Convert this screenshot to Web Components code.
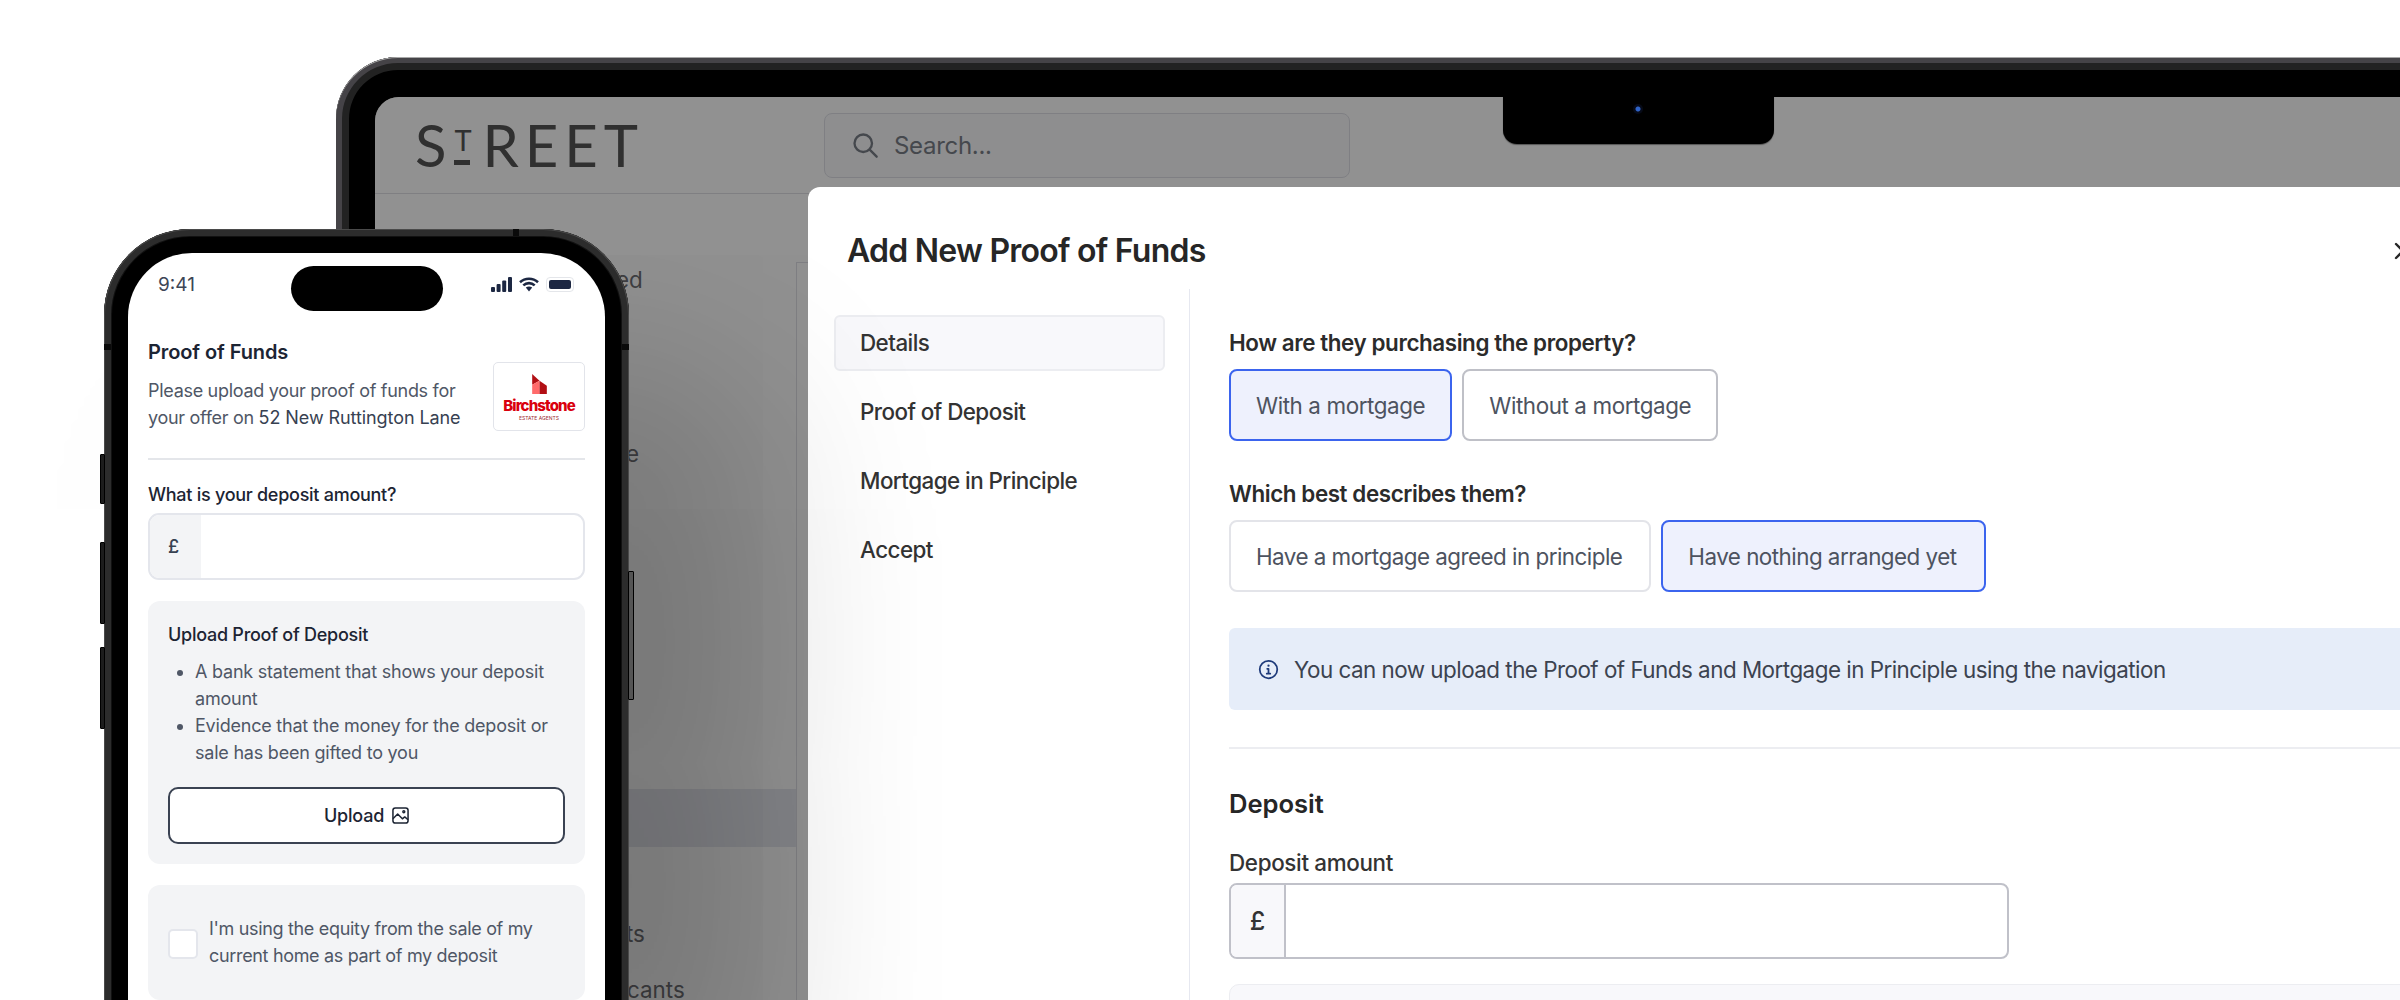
<!DOCTYPE html>
<html lang="en">
<head>
<meta charset="utf-8">
<title>Proof of Funds</title>
<style>
	html, body { margin: 0; width: 2400px; height: 1000px; overflow: hidden; background: #fff; }
	body { font-family: Inter, "Liberation Sans", sans-serif; position: relative; }
</style>
</head>
<body>
	<laptop-frame>
		<app-header></app-header>
		<app-sidebar>
			<side-text style="--x: 241px; --top: 72px">ed</side-text>
			<side-text style="--x: 251px; --top: 146px">e</side-text>
			<side-row style="--top: 321px"></side-row>
			<side-text style="--x: 251px; --top: 73px">ts</side-text>
			<side-text style="--x: 252px; --top: 28px">cants</side-text>
		</app-sidebar>
		<proof-modal slot="over"></proof-modal>
	</laptop-frame>

	<phone-frame>
		<status-bar></status-bar>
		<phone-form></phone-form>
	</phone-frame>

<script>
	class ShadowElement extends HTMLElement {
		constructor() {
			super();
			this.attachShadow({ mode: 'open' });
			this.shadowRoot.innerHTML = this.constructor.markup;
		}
	}

	const define = (name, markup) => {
		window.customElements.define(name, class extends ShadowElement {
			static get markup() { return markup; }
		});
	};

	define('laptop-frame', /* html */ `
		<style>
			:host {
				display: block;
				box-sizing: border-box;
				margin: 57px 0 0 336px;
				width: 2200px;
				height: 1100px;
				padding: 40px 0 0 39px;
				background: #000;
				border-radius: 62px;
				box-shadow:
					inset 0 1px 0 #a8a8a8,
					inset 0 0 0 6px #454347,
					inset 0 0 0 13px #222;
			}
			.screen {
				position: relative;
				height: 100%;
				background: #fff;
				border-radius: 24px 0 0 0;
				overflow: hidden;
				display: flex;
				flex-direction: column;
			}
			.dim {
				position: absolute;
				inset: 0;
				background: rgba(0, 0, 0, .43);
			}
			.notch {
				position: absolute;
				left: 1128px;
				top: -1px;
				width: 271px;
				height: 48px;
				background: #000;
				border-radius: 0 0 14px 14px;
				box-shadow: 0 1px 1px #555;
			}
			.camera {
				position: absolute;
				left: 130px;
				top: 8px;
				width: 10px;
				height: 10px;
				border-radius: 50%;
				background: radial-gradient(circle, #2f63c8 0 2px, #060a18 3px 5px);
			}
		</style>
		<div class="screen">
			<slot></slot>
			<div class="dim"></div>
			<div class="notch"><div class="camera"></div></div>
			<slot name="over"></slot>
		</div>
	`);

	define('app-header', /* html */ `
		<style>
			:host {
				display: flex;
				flex: none;
				align-items: center;
				box-sizing: border-box;
				height: 97px;
				border-bottom: 1px solid #dfe0e5;
			}
			.logo {
				display: flex;
				align-items: flex-start;
				width: 409px;
				margin-left: 40px;
				font: 400 58px/42px Lato, "Liberation Sans", sans-serif;
				letter-spacing: 6px;
				color: #555;
			}
			.mini {
				position: relative;
				height: 42px;
				width: 28px;
				margin-left: 2px;
				font-size: 29px;
				line-height: 31px;
				letter-spacing: 0;
			}
			.mini i {
				position: absolute;
				left: 0;
				bottom: 1px;
				width: 16px;
				height: 5px;
				background: #555;
			}
			.search {
				display: flex;
				align-items: center;
				gap: 15px;
				box-sizing: border-box;
				width: 526px;
				height: 65px;
				padding-left: 26px;
				border: 1px solid #dfe0e6;
				border-radius: 8px;
				background: #f9f9fb;
				font-size: 24px;
				letter-spacing: -.3px;
				color: #7a7f88;
			}
			svg { width: 28px; height: 28px; fill: none; stroke: #7a7f88; stroke-width: 2; stroke-linecap: round; }
		</style>
		<div class="logo"><span>S</span><span class="mini">T<i></i></span><span>REET</span></div>
		<div class="search">
			<svg viewBox="0 0 24 24"><circle cx="10.5" cy="10.5" r="7.5"/><path d="M16 16l6 6"/></svg>
			<span>Search...</span>
		</div>
	`);

	define('app-sidebar', /* html */ `
		<style>
			:host { display: flex; flex: 1; }
			.nav { display: flex; flex-direction: column; width: 421px; flex: none; }
			.panel {
				flex: 1;
				margin-top: 68px;
				border-left: 1px solid #dfe0e7;
				border-top: 1px solid #dfe0e7;
				background: #fff;
			}
		</style>
		<div class="nav"><slot></slot></div>
		<div class="panel"></div>
	`);

	define('side-text', /* html */ `
		<style>
			:host {
				display: block;
				margin-top: var(--top);
				padding-left: var(--x);
				font-size: 22.4px;
				line-height: 28px;
				color: #6f7075;
			}
		</style>
		<slot></slot>
	`);

	define('side-row', /* html */ `
		<style>
			:host {
				display: block;
				margin-top: var(--top);
				height: 58px;
				background: #e6e8f0;
			}
		</style>
	`);

	define('proof-modal', /* html */ `
		<style>
			:host {
				position: absolute;
				left: 433px;
				top: 90px;
				width: 1620px;
				height: 920px;
				background: #fff;
				border-radius: 12px 0 0 0;
				color: #262626;
			}
			.head {
				display: flex;
				justify-content: space-between;
				align-items: center;
				box-sizing: border-box;
				height: 102px;
				padding: 26px 16px 0 39px;
			}
			h1 { margin: 0; font-size: 32px; line-height: 40px; font-weight: 600; letter-spacing: -.75px; }
			.close { width: 18px; height: 18px; fill: none; stroke: #262626; stroke-width: 2.4; stroke-linecap: round; }
			.body { display: flex; }
			nav {
				box-sizing: border-box;
				width: 382px;
				flex: none;
				height: 820px;
				padding: 26px 24px 0 26px;
				border-right: 1px solid #e6e8f0;
				display: flex;
				flex-direction: column;
				gap: 13px;
			}
			main { flex: 1; padding: 40px 0 0 39px; }
			h2 { margin: 0; font-size: 22.4px; line-height: 28px; font-weight: 600; letter-spacing: -.41px; color: #2b2b2b; }
			.choices { display: flex; gap: 10px; margin-top: 12px; }
			.second { margin-top: 39px; }
			.divider { height: 2px; margin-top: 37px; background: #ecedf1; }
			h3 { margin: 39px 0 0; font-size: 25.6px; line-height: 32px; font-weight: 600; letter-spacing: -.05px; }
			label { display: block; margin-top: 29px; font-size: 22.4px; line-height: 28px; font-weight: 500; letter-spacing: -.33px; color: #333; }
			.next {
				height: 120px;
				margin-top: 25px;
				background: #f8f8fb;
				border: 1px solid #ecedf1;
				border-radius: 10px;
			}
		</style>
		<div class="head">
			<h1>Add New Proof of Funds</h1>
			<svg class="close" viewBox="0 0 18 18"><path d="M2 2l14 14M16 2L2 16"/></svg>
		</div>
		<div class="body">
			<nav>
				<modal-tab active>Details</modal-tab>
				<modal-tab>Proof of Deposit</modal-tab>
				<modal-tab>Mortgage in Principle</modal-tab>
				<modal-tab>Accept</modal-tab>
			</nav>
			<main>
				<h2>How are they purchasing the property?</h2>
				<div class="choices">
					<choice-button selected>With a mortgage</choice-button>
					<choice-button strong>Without a mortgage</choice-button>
				</div>
				<h2 class="second">Which best describes them?</h2>
				<div class="choices">
					<choice-button tight>Have a mortgage agreed in principle</choice-button>
					<choice-button tight selected>Have nothing arranged yet</choice-button>
				</div>
				<info-banner>You can now upload the Proof of Funds and Mortgage in Principle using the navigation</info-banner>
				<div class="divider"></div>
				<h3>Deposit</h3>
				<label>Deposit amount</label>
				<money-input></money-input>
				<div class="next"></div>
			</main>
		</div>
	`);

	define('modal-tab', /* html */ `
		<style>
			:host {
				display: flex;
				align-items: center;
				box-sizing: border-box;
				height: 56px;
				padding: 0 0 2px 24px;
				border: 2px solid transparent;
				border-radius: 6px;
				font-size: 22.4px;
				font-weight: 500;
				letter-spacing: -.55px;
				color: #333;
			}
			:host([active]) { background: #f8f8fb; border-color: #ecedf1; }
		</style>
		<slot></slot>
	`);

	define('choice-button', /* html */ `
		<style>
			:host {
				display: flex;
				align-items: center;
				box-sizing: border-box;
				height: 72px;
				padding: 0 25px;
				border: 2px solid #e3e4e9;
				border-radius: 8px;
				font-size: 22.4px;
				letter-spacing: -.4px;
				color: #4d5360;
			}
			:host([tight]) { padding-right: 27px; letter-spacing: -.52px; }
			:host([strong]) { border-color: #bfc0c7; }
			:host([selected]) { background: #eef1fd; border-color: #3b64ee; }
		</style>
		<slot></slot>
	`);

	define('info-banner', /* html */ `
		<style>
			:host {
				display: flex;
				align-items: center;
				gap: 15px;
				box-sizing: border-box;
				height: 82px;
				margin-top: 36px;
				padding-left: 29px;
				background: #e6edf9;
				border-radius: 6px 0 0 6px;
				font-size: 22.4px;
				letter-spacing: -.51px;
				color: #3c4350;
			}
			svg { width: 21px; height: 21px; flex: none; fill: none; stroke: #1e3a7a; stroke-width: 2; stroke-linecap: round; stroke-linejoin: round; }
			.dot { fill: #1e3a7a; stroke: none; }
		</style>
		<svg viewBox="0 0 24 24">
			<circle cx="12" cy="12" r="10"/>
			<path d="M10.5 11.2H12V16.5M10 16.8h4"/>
			<circle class="dot" cx="12" cy="7.6" r="1.3"/>
		</svg>
		<span><slot></slot></span>
	`);

	define('money-input', /* html */ `
		<style>
			:host {
				display: flex;
				box-sizing: border-box;
				width: 780px;
				height: 76px;
				margin-top: 6px;
				border: 2px solid #c0c1c9;
				border-radius: 8px;
				overflow: hidden;
			}
			span {
				display: flex;
				align-items: center;
				justify-content: center;
				width: 53px;
				background: #f8f8fb;
				border-right: 2px solid #c0c1c9;
				font-size: 25px;
				font-weight: 500;
				color: #333;
			}
		</style>
		<span>£</span>
	`);

	define('phone-frame', /* html */ `
		<style>
			:host {
				position: absolute;
				left: 104px;
				top: 229px;
				display: block;
				box-sizing: border-box;
				width: 525px;
				height: 900px;
				padding: 24px 24px 0;
				background: #000;
				border-radius: 86px;
				box-shadow:
					inset 0 0 0 1px #4a4a4a,
					inset 0 0 0 7px #2c2c2c,
					inset 0 0 0 8px #111,
					120px 150px 200px rgba(0, 0, 0, .2);
			}
			.screen {
				position: relative;
				height: 100%;
				background: #fff;
				border-radius: 64px;
			}
			.island {
				position: absolute;
				left: 163px;
				top: 13px;
				width: 152px;
				height: 45px;
				border-radius: 23px;
				background: #000;
			}
			.key { position: absolute; background: #1c1c1c; border: 1px solid #000; box-sizing: border-box; border-radius: 1px; }
			.left { left: -4px; width: 5px; }
			.right { right: -5px; width: 6px; top: 342px; height: 129px; background: #555; }
			.band { position: absolute; background: #0a0a0a; }
		</style>
		<div class="key left" style="top: 225px; height: 50px"></div>
		<div class="key left" style="top: 313px; height: 82px"></div>
		<div class="key left" style="top: 418px; height: 82px"></div>
		<div class="key right"></div>
		<div class="band" style="right: 0; top: 115px; width: 7px; height: 6px"></div>
		<div class="band" style="left: 0; top: 115px; width: 7px; height: 6px"></div>
		<div class="band" style="right: 110px; top: 0; width: 6px; height: 7px"></div>
		<div class="screen">
			<div class="island"></div>
			<slot></slot>
		</div>
	`);

	define('status-bar', /* html */ `
		<style>
			:host {
				display: flex;
				justify-content: space-between;
				align-items: center;
				box-sizing: border-box;
				height: 62px;
				padding: 0 31px 0 30px;
				font-size: 19px;
				color: #3d4656;
			}
			.icons { display: flex; align-items: center; gap: 7px; }
			svg { display: block; fill: #1c2742; }
			.wifi { fill: none; stroke: #1c2742; stroke-width: 2.6; }
			.battery {
				position: relative;
				box-sizing: border-box;
				width: 28px;
				height: 15px;
				padding: 2px;
				border: 1px solid #e4e6ea;
				border-radius: 4px;
			}
			.battery i { display: block; height: 100%; background: #1c2742; border-radius: 2px; }
		</style>
		<span>9:41</span>
		<div class="icons">
			<svg width="21" height="15" viewBox="0 0 21 15">
				<rect x="0" y="10" width="4" height="5" rx="1"/>
				<rect x="5.6" y="7" width="4" height="8" rx="1"/>
				<rect x="11.2" y="3.5" width="4" height="11.5" rx="1"/>
				<rect x="17" y="0" width="4" height="15" rx="1"/>
			</svg>
			<svg width="20" height="15" viewBox="0 0 20 15">
				<path class="wifi" d="M1 5.2C6 .6 14 .6 19 5.2M4.3 8.4c3.3-3 8.1-3 11.4 0"/>
				<path d="M6.8 10.6c2-1.6 4.4-1.6 6.4 0L10 14.6z"/>
			</svg>
			<div class="battery"><i></i></div>
		</div>
	`);

	define('birchstone-logo', /* html */ `
		<style>
			:host {
				display: flex;
				flex-direction: column;
				align-items: center;
				box-sizing: border-box;
				flex: none;
				width: 92px;
				height: 69px;
				padding-top: 11px;
				border: 1.5px solid #e2e4ea;
				border-radius: 5px;
				background: #fff;
				letter-spacing: 0;
			}
			svg { display: block; width: 15px; height: 20px; }
			b { margin-top: 3px; font-size: 15px; line-height: 18px; font-weight: 800; letter-spacing: -.9px; color: #d9000d; }
			span { font-size: 5px; line-height: 7px; color: #9c2a30; white-space: nowrap; }
		</style>
		<svg viewBox="0 0 44 60">
			<path fill="#b20f14" d="M0 0L22 20 0 32z"/>
			<path fill="#ff6b6b" d="M0 32L22 20V60H0z"/>
			<path fill="#b20f14" d="M22 20L44 35V60H22z"/>
		</svg>
		<b>Birchstone</b>
		<span>ESTATE AGENTS</span>
	`);

	define('phone-form', /* html */ `
		<style>
			:host {
				display: block;
				padding: 23px 20px 0;
				font-size: 18px;
				line-height: 27px;
				letter-spacing: -.22px;
				color: #4f5766;
			}
			.top { display: flex; justify-content: space-between; align-items: flex-end; }
			h1 { margin: 0 0 10.5px; font-size: 20px; line-height: 28px; font-weight: 600; letter-spacing: -.1px; color: #1c2433; }
			p { margin: 0; white-space: nowrap; letter-spacing: -.3px; }
			p em { font-style: normal; letter-spacing: -.08px; color: #374151; }
			hr { height: 2px; margin: 27px 0 0; border: 0; background: #e4e6ea; }
			label { display: block; margin-top: 22px; line-height: 26px; font-weight: 500; letter-spacing: -.27px; color: #1c2433; }
			.amount {
				display: flex;
				box-sizing: border-box;
				height: 67px;
				margin-top: 5px;
				border: 2px solid #e4e6ec;
				border-radius: 11px;
				overflow: hidden;
			}
			.amount span {
				display: flex;
				align-items: center;
				justify-content: center;
				width: 47px;
				padding-right: 4px;
				background: #f3f4f6;
				font-weight: 500;
				color: #374151;
			}
			.card { margin-top: 21px; padding: 21px 20px 20px; background: #f3f4f6; border-radius: 12px; }
			h2 { margin: 0; font-size: 18px; line-height: 26px; font-weight: 500; letter-spacing: -.26px; color: #1c2433; }
			ul { margin: 10.5px 0 0; padding: 0 0 0 27px; }
			li::marker { color: #4f5766; }
			button {
				display: flex;
				align-items: center;
				justify-content: center;
				gap: 8px;
				box-sizing: border-box;
				width: 100%;
				height: 57px;
				margin-top: 20.5px;
				background: #fff;
				border: 2px solid #3a4252;
				border-radius: 10px;
				font: 500 18px Inter, sans-serif;
				letter-spacing: -.2px;
				color: #1c2433;
			}
			button svg { width: 17px; height: 17px; fill: none; stroke: #1c2433; stroke-width: 1.6; stroke-linejoin: round; }
			.equity { display: flex; align-items: center; gap: 11px; height: 115px; box-sizing: border-box; padding: 0 20px; letter-spacing: -.33px; }
			.box { flex: none; box-sizing: border-box; width: 30px; height: 30px; margin-top: 3px; background: #fff; border: 2px solid #e4e6ec; border-radius: 5px; }
		</style>
		<div class="top">
			<div>
				<h1>Proof of Funds</h1>
				<p>Please upload your proof of funds for<br>your offer on <em>52 New Ruttington Lane</em></p>
			</div>
			<birchstone-logo></birchstone-logo>
		</div>
		<hr>
		<label>What is your deposit amount?</label>
		<div class="amount"><span>£</span></div>
		<div class="card">
			<h2>Upload Proof of Deposit</h2>
			<ul>
				<li>A bank statement that shows your deposit amount</li>
				<li>Evidence that the money for the deposit or sale has been gifted to you</li>
			</ul>
			<button>Upload
				<svg viewBox="0 0 18 18">
					<rect x="1" y="1" width="16" height="16" rx="2.5"/>
					<path d="M1 12.5l5-5 5 5 2.5-2 3.5 3"/>
					<circle cx="12.5" cy="5" r="1"/>
				</svg>
			</button>
		</div>
		<div class="card equity">
			<div class="box"></div>
			<span>I'm using the equity from the sale of my current home as part of my deposit</span>
		</div>
	`);
</script>
</body>
</html>
